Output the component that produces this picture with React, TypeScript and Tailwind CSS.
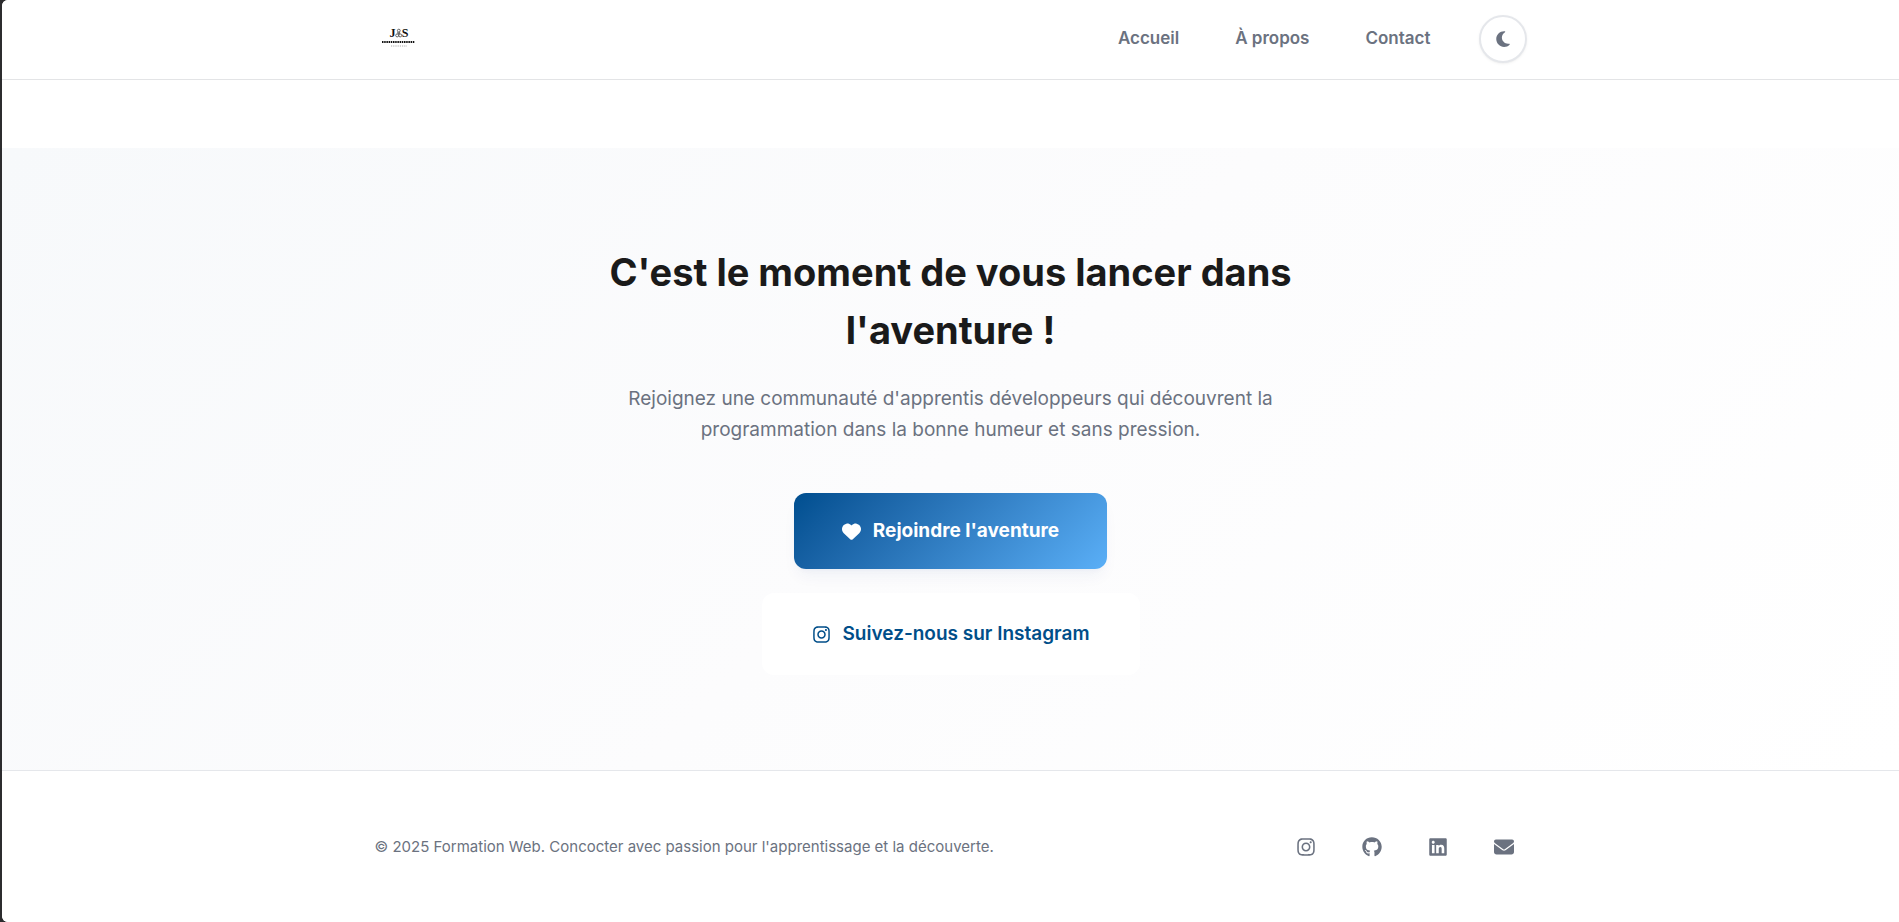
import React from "react";
import {
  FaEnvelope,
  FaGithub,
  FaHeart,
  FaInstagram,
  FaLinkedin,
  FaMoon,
} from "react-icons/fa6";

const navLinks = ["Accueil", "À propos", "Contact"];

const socials = [
  { label: "Instagram", Icon: FaInstagram },
  { label: "GitHub", Icon: FaGithub },
  { label: "LinkedIn", Icon: FaLinkedin },
  { label: "E-mail", Icon: FaEnvelope },
];

function Logo() {
  return (
    <svg viewBox="0 0 48 48" className="size-12" aria-hidden="true">
      <g className="font-['Liberation_Serif',serif]" fill="#111" textAnchor="middle">
        <text x="17.5" y="22" fontSize="12" fontWeight="700">J</text>
        <text x="30" y="22" fontSize="12" fontWeight="700">S</text>
      </g>
      <g fill="none" stroke="#444" strokeWidth="0.8">
        <circle cx="23.8" cy="15.6" r="1.4" />
        <circle cx="22.2" cy="20.4" r="1.5" />
        <circle cx="25.2" cy="20.4" r="1.5" />
        <path d="M22.3 17.4l2.8 1.6M25.2 17.2l-2.8 1.7" />
      </g>
      <path d="M7 27h33" stroke="#111" strokeWidth="2" strokeDasharray="1.5 0.7" />
      <path d="M16 31h16" stroke="#aaa" strokeWidth="1" strokeDasharray="1.2 1" />
    </svg>
  );
}

function Header() {
  return (
    <header className="border-b border-[#e3e4e6] bg-white pb-0.5">
      <div className="mx-auto flex h-[77px] max-w-[1200px] items-center justify-between px-6">
        <a href="#" aria-label="Accueil du site">
          <Logo />
        </a>
        <div className="flex items-center gap-12">
          <nav className="flex items-center gap-14 text-[17px] font-semibold text-[#6b7280]">
            {navLinks.map((label) => (
              <a key={label} href="#">
                {label}
              </a>
            ))}
          </nav>
          <button
            type="button"
            aria-label="Changer de thème"
            className="flex size-12 items-center justify-center rounded-full border-2 border-[#e5e7eb] bg-white text-lg text-[#6b7280] shadow-sm shadow-black/5"
          >
            <FaMoon />
          </button>
        </div>
      </div>
    </header>
  );
}

function CallToAction() {
  return (
    <section className="mt-17 bg-linear-135 from-[#f7f9fb] via-[#fcfcfd] to-white px-6 py-[95px] text-center">
      <div className="mx-auto flex max-w-[752px] flex-col items-center">
        <h2 className="text-[38px] leading-[58px] font-bold text-[#1a1a1a]">
          C'est le moment de vous lancer dans l'aventure !
        </h2>
        <p className="mt-6 max-w-[680px] text-[19px] leading-[31px] text-[#6b7280]">
          Rejoignez une communauté d'apprentis développeurs qui découvrent la
          programmation dans la bonne humeur et sans pression.
        </p>
        <a
          href="#"
          className="mt-12 flex h-19 items-center gap-3 rounded-xl bg-linear-135 from-[#004e8f] to-[#5aaff7] px-12 text-[19px] font-bold text-white shadow-lg shadow-blue-900/5"
        >
          <FaHeart />
          Rejoindre l'aventure
        </a>
        <a
          href="#"
          className="mt-6 flex h-[82px] items-center gap-3 rounded-xl border-2 border-white bg-white px-12 text-[19px] font-semibold text-[#004e89]"
        >
          <FaInstagram />
          Suivez-nous sur Instagram
        </a>
      </div>
    </section>
  );
}

function Footer() {
  return (
    <footer className="grow border-t border-[#e5e7eb] bg-white pt-[53px] pb-12">
      <div className="mx-auto flex max-w-[1200px] items-center justify-between px-6">
        <p className="text-[15px] text-[#6b7280]">
          © 2025 Formation Web. Concocter avec passion pour l'apprentissage et la
          découverte.
        </p>
        <ul className="flex gap-5 text-xl text-[#6b7280]">
          {socials.map(({ label, Icon }) => (
            <li key={label}>
              <a href="#" aria-label={label} className="flex size-[46px] items-center justify-center">
                <Icon />
              </a>
            </li>
          ))}
        </ul>
      </div>
    </footer>
  );
}

export default function App() {
  return (
    <div className="flex min-h-screen bg-[#2c2c2e] pl-0.5 font-['Inter',sans-serif]">
      <div className="flex grow flex-col overflow-hidden rounded-l-md bg-white">
        <Header />
        <CallToAction />
        <Footer />
      </div>
    </div>
  );
}
